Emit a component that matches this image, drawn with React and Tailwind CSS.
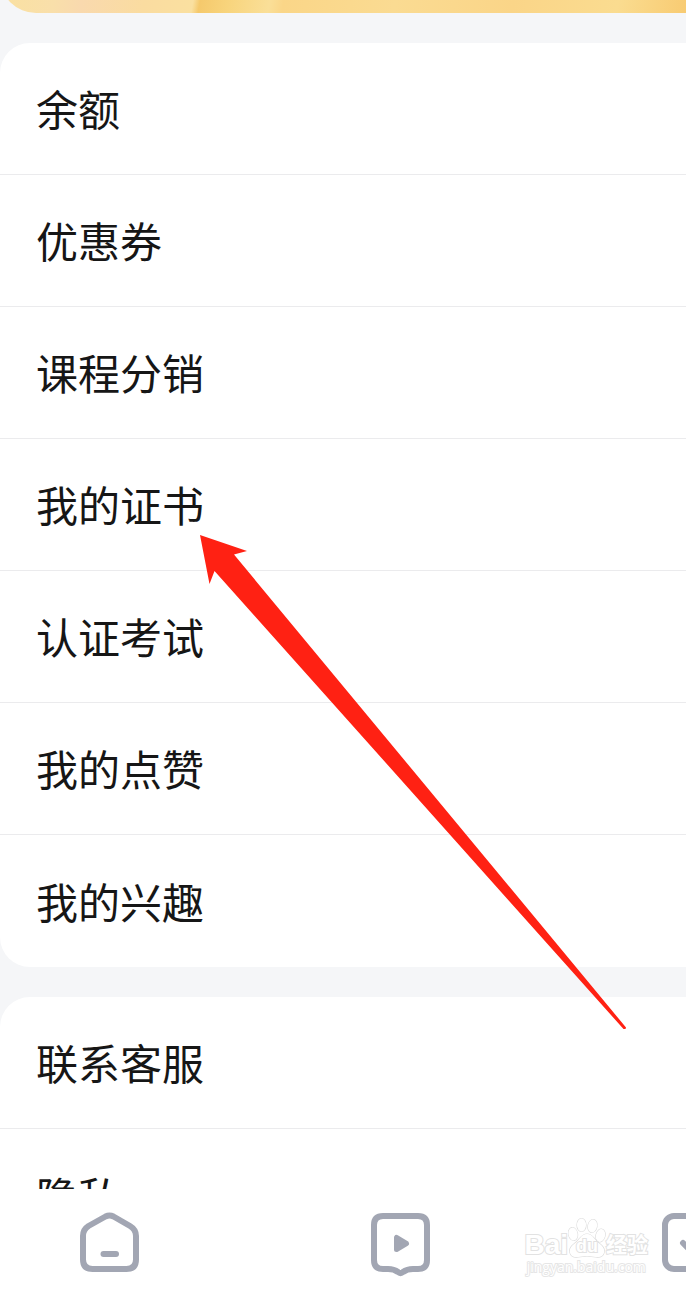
import React from 'react';

const accountItems = ['余额', '优惠券', '课程分销', '我的证书', '认证考试', '我的点赞', '我的兴趣'];
const supportItems = ['联系客服', '隐私'];

const MenuCard = ({ items }) => (
  <ul className="shrink-0 rounded-l-[30px] bg-white overflow-hidden">
    {items.map((item) => (
      <li key={item} className="h-[132px] border-b border-[#ebebed] last:border-b-0">
        <a href="#" className="flex items-center h-full px-9 pb-px text-[42px] leading-none text-[#161616]">
          {item}
        </a>
      </li>
    ))}
  </ul>
);

const HomeIcon = () => (
  <svg viewBox="0 0 64 64" className="size-16" fill="none" stroke="#a2a6b3" strokeWidth="6" strokeLinecap="round" strokeLinejoin="round">
    <path d="M28.500 6.500Q32.500 4.500 36.500 6.500L53 16Q59 19.500 59 26V49.500Q59 59 49.500 59H15.500Q6 59 6 49.500V26Q6 19.500 11.500 16Z" />
    <path d="M26.500 44H39" />
  </svg>
);

const CourseIcon = () => (
  <svg viewBox="0 0 64 64" className="size-16 overflow-visible" fill="none" stroke="#a2a6b3" strokeWidth="6" strokeLinejoin="round">
    <path d="M15 6H50Q59 6 59 15V50Q59 59 50 59H45Q39 59 35 62Q32.500 64.500 30 62Q26 59 20 59H15Q6 59 6 50V15Q6 6 15 6Z" />
    <path d="M28.500 27.500V39.500L38.500 33.500Z" fill="#a2a6b3" strokeWidth="5" />
  </svg>
);

const StudyIcon = () => (
  <svg viewBox="0 0 64 64" className="size-16" fill="none" stroke="#a2a6b3" strokeWidth="6" strokeLinecap="round" strokeLinejoin="round">
    <rect x="6" y="6" width="53" height="53" rx="9" />
    <path d="M24 33L31 40L43 27" />
  </svg>
);

const tabs = [
  { label: '首页', Icon: HomeIcon },
  { label: '课程', Icon: CourseIcon },
  { label: '学习', Icon: StudyIcon },
];

const Paw = () => (
  <svg viewBox="0 0 38 42" className="w-[38px] h-[42px]" fill="#fff" stroke="#dcdcdc" strokeWidth="1.200">
    <ellipse cx="5" cy="17" rx="4.500" ry="6.500" transform="rotate(-12 5 17)" />
    <ellipse cx="13.500" cy="8" rx="4.500" ry="6.500" />
    <ellipse cx="24.500" cy="9" rx="4.500" ry="6.500" transform="rotate(12 24.500 9)" />
    <ellipse cx="32.500" cy="18.500" rx="4.500" ry="6.500" transform="rotate(15 32.500 18.500)" />
    <path d="M19 17C13 17 12 23 6 27C-1 32 1 41 10 40C15 39 23 39 28 40C37 41 39 32 32 27C26 23 25 17 19 17Z" />
  </svg>
);

const Watermark = () => (
  <div className="absolute right-[38px] bottom-4 text-white [paint-order:stroke_fill]">
    <div className="flex items-end leading-none font-bold font-['Liberation_Sans','Noto_Sans_CJK_SC',sans-serif] [-webkit-text-stroke:2px_#e2e2e2]">
      <span className="text-[28px]">Bai</span>
      <span className="relative">
        <Paw />
        <span className="absolute inset-x-0 bottom-1 text-center text-[18px] leading-none">du</span>
      </span>
      <span className="text-[21px] leading-7">经验</span>
    </div>
    <div className="text-center text-[14px] leading-4 font-['Open_Sans',sans-serif] [-webkit-text-stroke:2px_#e6e6e6]">
      jingyan.baidu.com
    </div>
  </div>
);

const App = () => {
  return (
    <div className="relative flex flex-col h-screen overflow-hidden bg-[#f5f6f8] font-['Noto_Sans_CJK_SC',sans-serif]">
      <main className="flex-1 min-h-0 overflow-hidden flex flex-col gap-[30px]">
        {/* Bottom edge of the member banner */}
        <div className="flex items-end shrink-0 h-[13px] overflow-hidden">
          <div className="w-full h-16 shrink-0 rounded-bl-[36px] bg-[linear-gradient(100deg,#fae1a0_0%,#f9dfaa_9%,#f9d9ae_13%,#fadca0_22%,#fae0a0_29%,#f5c96c_30%,#f8d47c_34%,#fadf98_40%,#fad688_42%,#fadb92_58%,#fad588_75%,#fadc90_90%,#f8cb72_100%)]" />
        </div>
        <MenuCard items={accountItems} />
        <MenuCard items={supportItems} />
      </main>

      <nav className="flex shrink-0 gap-[227px] h-[102px] pl-[77px] pt-[21px] bg-white overflow-hidden">
        {tabs.map(({ label, Icon }) => (
          <button key={label} type="button" aria-label={label} className="shrink-0 size-16">
            <Icon />
          </button>
        ))}
      </nav>

      <Watermark />

      {/* Pointer to the certificates row */}
      <svg viewBox="0 0 426 494" className="absolute left-[200px] top-[535px] w-[426px] h-[494px] pointer-events-none" fill="#ff2113">
        <path d="M0 0L47 16L34 19.500L426 492.500L425.500 494H423.500L14.500 36L9.500 49Z" />
      </svg>
    </div>
  );
};

export default App;
